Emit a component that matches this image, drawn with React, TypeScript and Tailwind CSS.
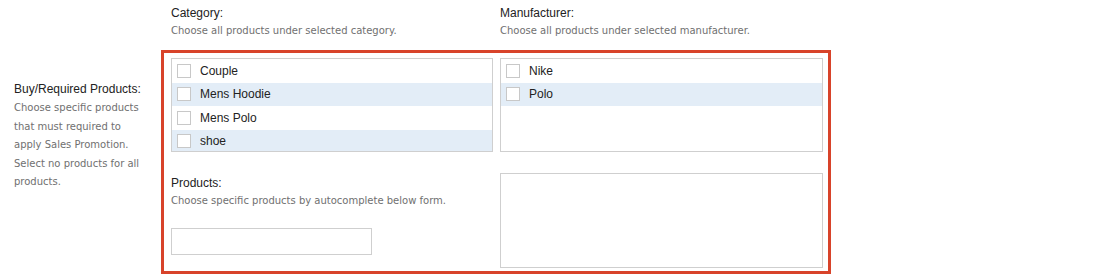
import React from 'react';

const categories = ['Couple', 'Mens Hoodie', 'Mens Polo', 'shoe'];
const manufacturers = ['Nike', 'Polo'];

const labelFont = "font-['Liberation_Sans',Arial,sans-serif]";
const descFont = "font-['DejaVu_Sans',Verdana,sans-serif]";

const CheckList: React.FC<{ items: string[] }> = ({ items }) => (
  <div className="h-[94px] border border-[#cfcfcf] bg-white overflow-hidden">
    {items.map((item, i) => (
      <div
        key={item}
        className={`flex items-center h-[23.5px] pl-[5px] ${i % 2 === 1 ? 'bg-[#e3edf7]' : 'bg-white'}`}
      >
        <span className="w-[14px] h-[14px] border border-[#c8c8c8] bg-white shrink-0" />
        <span className={`ml-[9px] text-[12px] text-[#222] ${labelFont}`}>{item}</span>
      </div>
    ))}
  </div>
);

const Field: React.FC<{ title: string; desc: string }> = ({ title, desc }) => (
  <div>
    <div className={`text-[12px] leading-[16px] text-[#222] ${labelFont}`}>{title}</div>
    <div className={`mt-[2px] text-[10px] leading-[16px] text-[#707070] ${descFont}`}>{desc}</div>
  </div>
);

export default function App() {
  return (
    <div className="w-[1100px] h-[275px] bg-white flex overflow-hidden">
      <div className="w-[161px] pl-[14px] pt-[81px]">
        <div className={`text-[12px] leading-[16px] text-[#222] ${labelFont}`}>Buy/Required Products:</div>
        <div className={`mt-[2px] w-[132px] text-[10px] leading-[18.5px] text-[#707070] ${descFont}`}>
          Choose specific products that must required to apply Sales Promotion. Select no products for all products.
        </div>
      </div>

      <div className="w-[670px]">
        <div className="flex pt-[5px] h-[50px]">
          <div className="w-[339px] pl-[10px]">
            <Field title="Category:" desc="Choose all products under selected category." />
          </div>
          <div>
            <Field title="Manufacturer:" desc="Choose all products under selected manufacturer." />
          </div>
        </div>

        <div className="border-[3px] border-[#d8432a] h-[224px] pl-[7px] pr-[4px] pt-[5px]">
          <div className="grid grid-cols-[322px_323px] gap-x-[7px] gap-y-[21px]">
            <CheckList items={categories} />
            <CheckList items={manufacturers} />

            <div className="pt-[2px]">
              <Field title="Products:" desc="Choose specific products by autocomplete below form." />
              <div className="mt-[19px] w-[201px] h-[27px] border border-[#cfcfcf] bg-white" />
            </div>
            <div className="h-[95px] border border-[#cfcfcf] bg-white" />
          </div>
        </div>
      </div>
    </div>
  );
}
